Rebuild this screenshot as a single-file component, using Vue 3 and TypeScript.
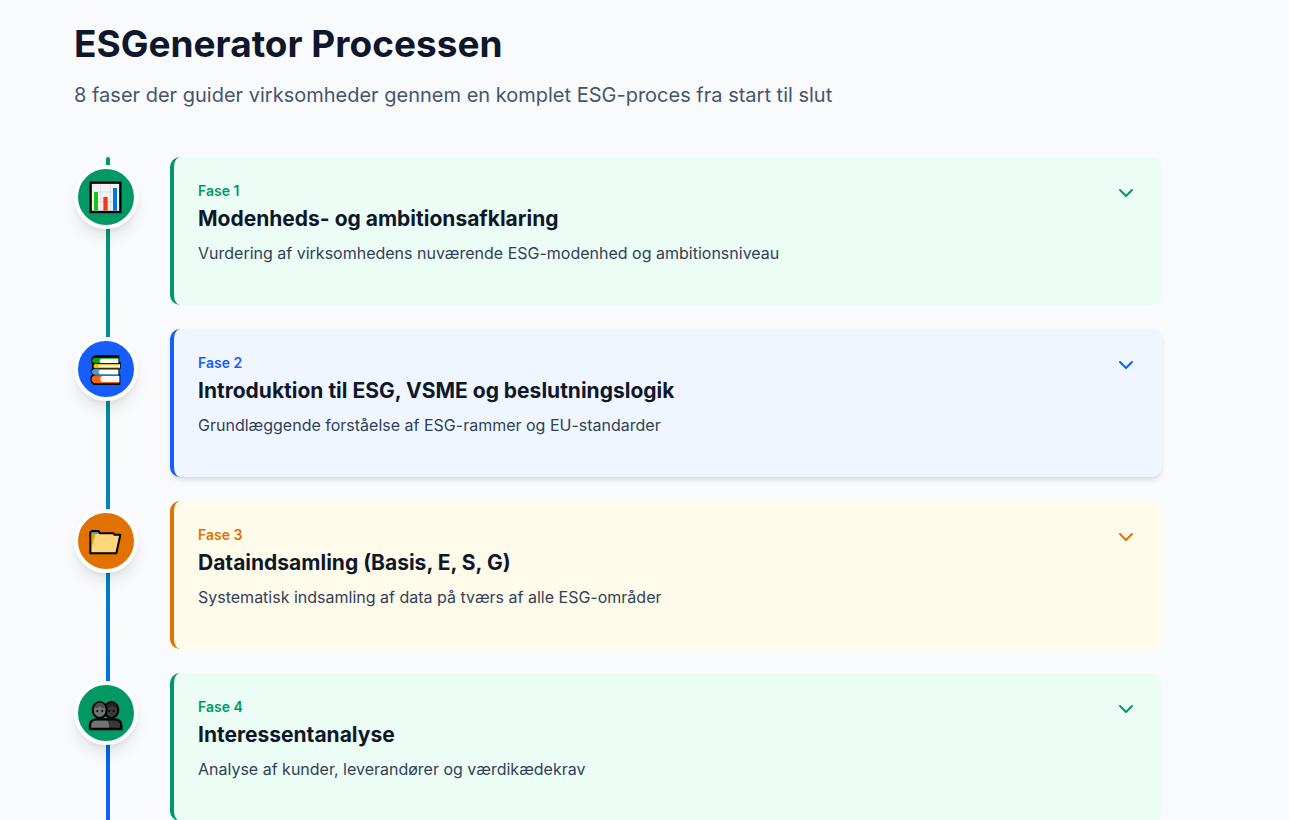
<script setup lang="ts">
import { ref } from 'vue'

type Tone = 'green' | 'blue' | 'amber'
type Icon = 'chart' | 'books' | 'folder' | 'people'

interface Phase {
  id: number
  title: string
  description: string
  tone: Tone
  icon: Icon
}

const phases: Phase[] = [
  { id: 1, title: 'Modenheds- og ambitionsafklaring', description: 'Vurdering af virksomhedens nuværende ESG-modenhed og ambitionsniveau', tone: 'green', icon: 'chart' },
  { id: 2, title: 'Introduktion til ESG, VSME og beslutningslogik', description: 'Grundlæggende forståelse af ESG-rammer og EU-standarder', tone: 'blue', icon: 'books' },
  { id: 3, title: 'Dataindsamling (Basis, E, S, G)', description: 'Systematisk indsamling af data på tværs af alle ESG-områder', tone: 'amber', icon: 'folder' },
  { id: 4, title: 'Interessentanalyse', description: 'Analyse af kunder, leverandører og værdikædekrav', tone: 'green', icon: 'people' },
]

const active = ref(2)
</script>

<template>
  <main class="page">
    <header class="intro">
      <h1>ESGenerator Processen</h1>
      <p>8 faser der guider virksomheder gennem en komplet ESG-proces fra start til slut</p>
    </header>

    <ol class="timeline">
      <li v-for="phase in phases" :key="phase.id" class="phase" :class="phase.tone">
        <div class="marker">
          <svg v-if="phase.icon === 'chart'" viewBox="0 0 168 168" aria-hidden="true">
            <rect x="38" y="41" width="89" height="88" fill="#f2f2f4" stroke="#000" stroke-width="7" />
            <path d="M42 69H123M42 98H123M68 45V125M97 45V125" stroke="#dedee2" stroke-width="3" />
            <path d="M48 69h12v56H48z" fill="#16c60c" />
            <path d="M76 84h13v41H76z" fill="#f03a17" />
            <path d="M105 57h12v68h-12z" fill="#0078d7" />
          </svg>
          <svg v-else-if="phase.icon === 'books'" viewBox="0 0 168 168" aria-hidden="true">
            <path d="M54 43h70v20h4v20h-4v17h3v32H52c-17 0-19-25-8-33-7-4-7-13-1-18-2-4-2-7 0-11-8-9-3-27 11-27z" fill="#000" />
            <path d="M54 50h67v17H54c-16 0-16-17 0-17z" fill="#13a10e" />
            <path d="M71 53h50v13H71c-8 0-8-13 0-13z" fill="#fff" />
            <path d="M50 69h76v13H50c-5-2-5-11 0-13z" fill="#ffb900" />
            <path d="M64 73h62v5H64c-4 0-4-5 0-5z" fill="#fff" />
            <path d="M52 84h69v17H52c-14 0-14-17 0-17z" fill="#429ce3" />
            <path d="M68 87h53v13H68c-8 0-8-13 0-13z" fill="#fff" />
            <path d="M54 103h70v24H54c-18 0-18-24 0-24z" fill="#f7630c" />
            <path d="M75 105h49v18H75c-11 0-11-18 0-18z" fill="#fff" />
          </svg>
          <svg v-else-if="phase.icon === 'folder'" viewBox="0 0 168 168" aria-hidden="true">
            <path d="M37 121V58l5-4h19l6 7h40l2 4h18l-12 56z" fill="#ffd679" />
            <path d="M40 63h12L40 107z" fill="#e8a200" />
            <path d="M42 57h19l4 6H42z" fill="#429ce3" />
            <path d="M37 121V58l5-4h19l6 7h40l2 4h18l-12 56z" fill="none" stroke="#000" stroke-width="6" stroke-linejoin="round" />
          </svg>
          <svg v-else viewBox="0 0 168 168" aria-hidden="true">
            <path d="M36 132v-10q0-19 19-19h56q19 0 19 19v10z" fill="#383838" />
            <path d="M36 132v-10q0-19 19-19h19q19 0 19 19v10z" fill="#737373" />
            <path d="M36 132v-10q0-19 19-19h56q19 0 19 19v10z" fill="none" stroke="#000" stroke-width="7" />
            <ellipse cx="100" cy="75" rx="21" ry="24" fill="#383838" stroke="#000" stroke-width="6" />
            <ellipse cx="65" cy="75" rx="21" ry="24" fill="#737373" stroke="#000" stroke-width="6" />
            <path d="M48 70c3-22 32-22 35 0-9 0-13-3-16-6-4 4-11 6-19 6z" fill="#4c4c4c" />
            <path d="M87 68c4-20 27-20 31 0-8 0-12-2-15-5-4 3-9 5-16 5z" fill="#252525" />
            <g fill="#000">
              <circle cx="58" cy="78" r="3" /><circle cx="73" cy="78" r="3" />
              <circle cx="93" cy="78" r="3" /><circle cx="107" cy="78" r="3" />
            </g>
          </svg>
        </div>
        <article class="card" :class="{ raised: active === phase.id }" @mouseenter="active = phase.id">
          <div class="copy">
            <p class="label">Fase {{ phase.id }}</p>
            <h2>{{ phase.title }}</h2>
            <p class="description">{{ phase.description }}</p>
          </div>
          <button type="button" class="toggle" :aria-label="`Vis fase ${phase.id}`">
            <svg viewBox="0 0 24 24" aria-hidden="true"><path d="m6 9 6 6 6-6" /></svg>
          </button>
        </article>
      </li>
    </ol>
  </main>
</template>

<style>
body {
  margin: 0;
  background: #f9fafc;
}
</style>

<style scoped>
.page {
  box-sizing: border-box;
  height: 100vh;
  overflow: hidden;
  padding: 24px 127px 0 74px;
  color: #0f172b;
  font-family: Inter, "Liberation Sans", sans-serif;
}
h1, h2, p, ol { margin: 0; padding: 0; }
.intro { margin-bottom: 48px; }
h1 {
  font-size: 37px;
  font-weight: 700;
  line-height: 40px;
}
.intro p {
  margin-top: 17px;
  color: #45556c;
  font-size: 20px;
  line-height: 28px;
}
.timeline {
  position: relative;
  display: flex;
  flex-direction: column;
  gap: 24px;
  list-style: none;
}
.timeline::before {
  content: "";
  position: absolute;
  top: 0;
  bottom: 0;
  left: 32px;
  width: 4px;
  border-radius: 4px 4px 0 0;
  background: linear-gradient(in oklab, #096, #155dfc);
}
.phase { display: flex; gap: 32px; }
.marker {
  box-sizing: border-box;
  position: relative;
  flex: none;
  width: 64px;
  height: 64px;
  margin-top: 8px;
  border: 4px solid #fff;
  border-radius: 50%;
  background: var(--accent);
  box-shadow: 0 10px 15px -3px rgb(0 0 0 / 10%), 0 4px 6px -4px rgb(0 0 0 / 10%);
}
.marker svg { display: block; width: 100%; height: 100%; }
.card {
  display: flex;
  flex: 1;
  gap: 16px;
  padding: 24px 24px 40px;
  border-left: 4px solid var(--accent);
  border-radius: 10px;
  background: var(--tint);
}
.raised { box-shadow: 0 4px 6px -1px rgb(0 0 0 / 10%), 0 2px 4px -2px rgb(0 0 0 / 10%); }
.copy { flex: 1; }
.label {
  color: var(--accent);
  font-size: 14px;
  font-weight: 600;
  line-height: 20px;
}
h2 {
  margin-top: 4px;
  font-size: 21px;
  font-weight: 700;
  line-height: 28px;
}
.description {
  margin-top: 8px;
  color: #314158;
  font-size: 16px;
  line-height: 24px;
}
.toggle {
  align-self: flex-start;
  width: 24px;
  height: 24px;
  padding: 0;
  border: 0;
  background: none;
  color: var(--accent);
  cursor: pointer;
}
.toggle svg {
  display: block;
  fill: none;
  stroke: currentColor;
  stroke-width: 2;
  stroke-linecap: round;
  stroke-linejoin: round;
}
.green { --accent: #096; --tint: #ecfdf5; }
.blue { --accent: #155dfc; --tint: #eff6ff; }
.amber { --accent: #e17100; --tint: #fffbeb; }
</style>
